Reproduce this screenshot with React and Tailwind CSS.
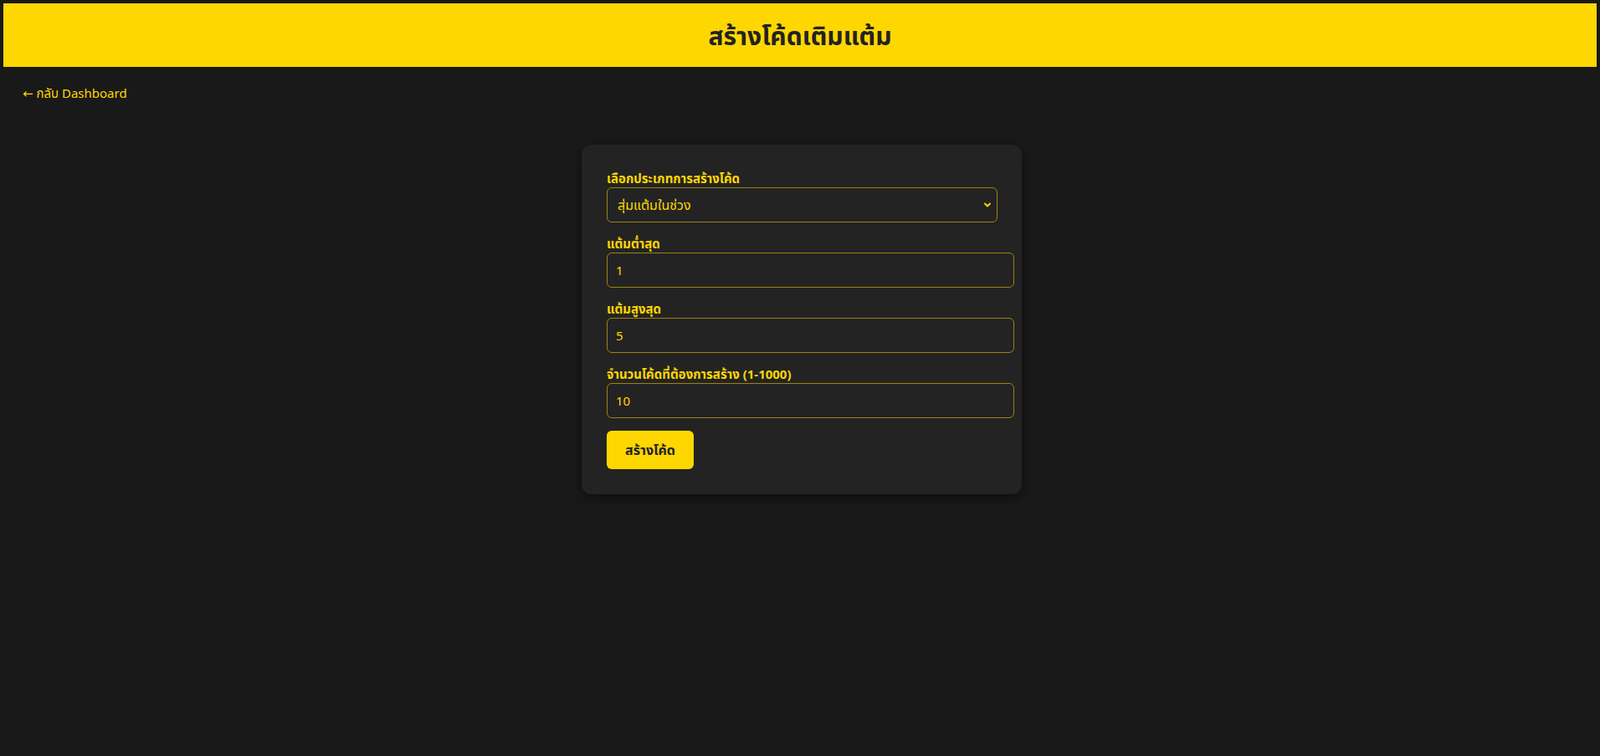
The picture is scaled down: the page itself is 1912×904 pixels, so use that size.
import { ChevronDown } from 'lucide-react';

const fields = [
    { label: 'แต้มต่ำสุด', value: '1' },
    { label: 'แต้มสูงสุด', value: '5' },
    { label: 'จำนวนโค้ดที่ต้องการสร้าง (1-1000)', value: '10' },
];

const App = () => (
    <div className="min-h-screen bg-[#191919] pt-1 font-['Noto_Sans','Noto_Sans_Thai',sans-serif]">
        <header className="mx-1 h-[76px] bg-[#FFD700] flex items-center justify-center">
            <h1 className="text-[30px] font-bold text-[#222222]">สร้างโค้ดเติมแต้ม</h1>
        </header>

        <div className="pl-[27px] pt-[19px]">
            <a href="#" className="text-[15px] leading-5 text-[#FFD700]">
                <span className="font-['DejaVu_Sans',sans-serif]">←</span> กลับ Dashboard
            </a>
        </div>

        <div className="mt-[50px] flex justify-center">
            <div className="w-[526px] bg-[#232323] rounded-xl p-[30px] shadow-[0_4px_14px_rgba(0,0,0,0.45)] ml-[4px]">
                <div className="mb-[15px]">
                    <label className="block text-[15px] leading-[21px] font-bold text-[#FFD700]">เลือกประเภทการสร้างโค้ด</label>
                    <div className="relative w-[467px]">
                        <select
                            defaultValue="range"
                            className="appearance-none w-full h-[42px] pl-3 pr-6 bg-[#232323] border border-[#9a8312] rounded-md text-[16px] text-[#FFD700] outline-none"
                        >
                            <option value="range">สุ่มแต้มในช่วง</option>
                            <option value="fixed">แต้มคงที่</option>
                        </select>
                        <ChevronDown size={12} strokeWidth={4} className="absolute right-[6px] top-1/2 -translate-y-1/2 text-[#FFD700] pointer-events-none" />
                    </div>
                </div>

                {fields.map(({ label, value }) => (
                    <div key={label} className="mb-[15px]">
                        <label className="block text-[15px] leading-[21px] font-bold text-[#FFD700]">{label}</label>
                        <input
                            type="number"
                            defaultValue={value}
                            className="block w-[487px] h-[42px] px-[10px] bg-[#232323] border border-[#9a8312] rounded-md text-[15px] text-[#FFD700] outline-none [appearance:textfield] [&::-webkit-inner-spin-button]:appearance-none"
                        />
                    </div>
                ))}

                <button className="h-[46px] px-[22px] bg-[#FFD700] rounded-md text-[16px] font-bold text-[#222222]">
                    สร้างโค้ด
                </button>
            </div>
        </div>
    </div>
);

export default App;
